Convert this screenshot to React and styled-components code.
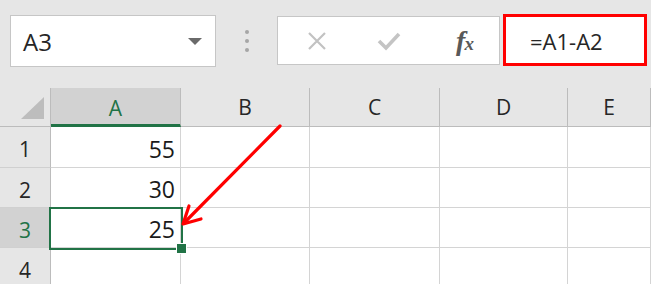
import React from 'react'
import styled, { createGlobalStyle } from 'styled-components'

const Global = createGlobalStyle`
  html, body {
    margin: 0;
    padding: 0;
    background: #e6e6e6;
    font-family: 'Open Sans', 'Noto Sans', sans-serif;
    overflow: hidden;
  }
`

const Page = styled.div`
  position: relative;
  width: 651px;
  height: 284px;
  overflow: hidden;
`

const Toolbar = styled.div`
  height: 88px;
  display: flex;
  align-items: flex-start;
  padding-left: 10px;
  box-sizing: border-box;
`

const NameBox = styled.div`
  margin-top: 15px;
  width: 206px;
  height: 52px;
  box-sizing: border-box;
  background: #fff;
  border: 1px solid #c6c6c6;
  display: flex;
  align-items: center;
  justify-content: space-between;
  padding: 0 13px 0 12px;
  font-size: 24px;
  color: #262626;
`

const Caret = styled.span`
  width: 0;
  height: 0;
  border-left: 7px solid transparent;
  border-right: 7px solid transparent;
  border-top: 7px solid #6a6a6a;
  margin-top: 1px;
`

const Grip = styled.div`
  width: 61px;
  height: 88px;
  display: flex;
  flex-direction: column;
  align-items: center;
  padding-top: 30px;
  gap: 5px;
  box-sizing: border-box;
`

const Dot = styled.span`
  width: 4px;
  height: 4px;
  border-radius: 50%;
  background: #a6a6a6;
`

const Buttons = styled.div`
  margin-top: 16px;
  width: 223px;
  height: 49px;
  box-sizing: border-box;
  background: #fff;
  border: 1px solid #c6c6c6;
  display: grid;
  grid-template-columns: 78px 66px 1fr;
  align-items: center;
  justify-items: center;
`

const Fx = styled.span`
  font-family: 'Liberation Serif', 'DejaVu Serif', serif;
  font-style: italic;
  font-weight: bold;
  font-size: 28px;
  line-height: 1;
  color: #595959;
  letter-spacing: -1px;
  padding-left: 8px;
  small {
    font-size: 19px;
  }
`

const Formula = styled.div`
  margin-top: 14px;
  margin-left: 3px;
  width: 144px;
  height: 52px;
  box-sizing: border-box;
  background: #fff;
  border: 3px solid #ff0000;
  display: flex;
  align-items: center;
  padding-left: 24px;
  padding-top: 2px;
  font-size: 22px;
  color: #262626;
`

const Sheet = styled.div`
  display: grid;
  grid-template-columns: 51px 130px 129px 130px 128px 1fr;
  grid-template-rows: 39px 41px 40px 40px 40px;
  background: #fff;
`

const ColHead = styled.div`
  background: ${p => (p.$active ? '#d2d2d2' : '#e6e6e6')};
  border-right: 1px solid #bcbcbc;
  border-bottom: ${p => (p.$active ? '3px solid #217346' : '1px solid #bcbcbc')};
  color: ${p => (p.$active ? '#217346' : '#262626')};
  box-sizing: border-box;
  display: flex;
  align-items: center;
  justify-content: center;
  padding-top: ${p => (p.$active ? '4px' : '0')};
  font-size: 21px;
`

const Corner = styled.div`
  background: #e6e6e6;
  border-right: 1px solid #bcbcbc;
  border-bottom: 1px solid #bcbcbc;
  box-sizing: border-box;
  display: flex;
  align-items: flex-end;
  justify-content: flex-end;
  padding: 0 6px 7px 0;
`

const CornerMark = styled.span`
  width: 0;
  height: 0;
  border-left: 23px solid transparent;
  border-bottom: 22px solid #bdbdbd;
`

const RowHead = styled.div`
  background: ${p => (p.$active ? '#d2d2d2' : '#e6e6e6')};
  border-right: 1px solid #bcbcbc;
  border-bottom: 1px solid #d0d0d0;
  color: ${p => (p.$active ? '#217346' : '#262626')};
  box-sizing: border-box;
  display: flex;
  align-items: center;
  justify-content: center;
  padding-top: 4px;
  font-size: 21px;
`

const Cell = styled.div`
  border-right: 1px solid #d4d4d4;
  border-bottom: 1px solid #d4d4d4;
  box-sizing: border-box;
  display: flex;
  align-items: flex-end;
  justify-content: flex-end;
  padding: 0 5px 2px 0;
  font-size: 23px;
  color: #1a1a1a;
`

const Selection = styled.div`
  position: absolute;
  left: 49px;
  top: 207px;
  width: 134px;
  height: 43px;
  box-sizing: border-box;
  border: 2px solid #217346;
  pointer-events: none;
`

const Handle = styled.div`
  position: absolute;
  right: -6px;
  bottom: -6px;
  width: 9px;
  height: 9px;
  background: #217346;
  border: 1px solid #fff;
`

const Overlay = styled.svg`
  position: absolute;
  left: 0;
  top: 0;
  pointer-events: none;
`

const columns = ['A', 'B', 'C', 'D', 'E']
const rows = [
  { n: 1, a: '55' },
  { n: 2, a: '30' },
  { n: 3, a: '25', active: true },
  { n: 4, a: '' },
]

export default function App() {
  return (
    <Page>
      <Global />
      <Toolbar>
        <NameBox>
          A3
          <Caret />
        </NameBox>
        <Grip>
          <Dot />
          <Dot />
          <Dot />
        </Grip>
        <Buttons>
          <svg width="22" height="22" viewBox="0 0 22 22">
            <path d="M3 3 L19 19 M19 3 L3 19" stroke="#c2c2c2" strokeWidth="2.2" fill="none" />
          </svg>
          <svg width="26" height="24" viewBox="0 0 26 24">
            <path d="M3 12 L10 19 L23 5" stroke="#c4c4c4" strokeWidth="3.6" fill="none" />
          </svg>
          <Fx>
            f<small>x</small>
          </Fx>
        </Buttons>
        <Formula>=A1-A2</Formula>
      </Toolbar>
      <Sheet>
        <Corner>
          <CornerMark />
        </Corner>
        {columns.map(c => (
          <ColHead key={c} $active={c === 'A'}>
            {c}
          </ColHead>
        ))}
        {rows.map(r => (
          <React.Fragment key={r.n}>
            <RowHead $active={r.active}>{r.n}</RowHead>
            <Cell>{r.a}</Cell>
            <Cell />
            <Cell />
            <Cell />
            <Cell />
          </React.Fragment>
        ))}
      </Sheet>
      <Selection>
        <Handle />
      </Selection>
      <Overlay width="651" height="284">
        <path d="M280 126 L184 223" stroke="#ff0000" strokeWidth="3.2" fill="none" strokeLinecap="round" />
        <path d="M189 206 L183 224 L201 219" stroke="#ff0000" strokeWidth="3.2" fill="none" strokeLinecap="round" strokeLinejoin="round" />
      </Overlay>
    </Page>
  )
}
